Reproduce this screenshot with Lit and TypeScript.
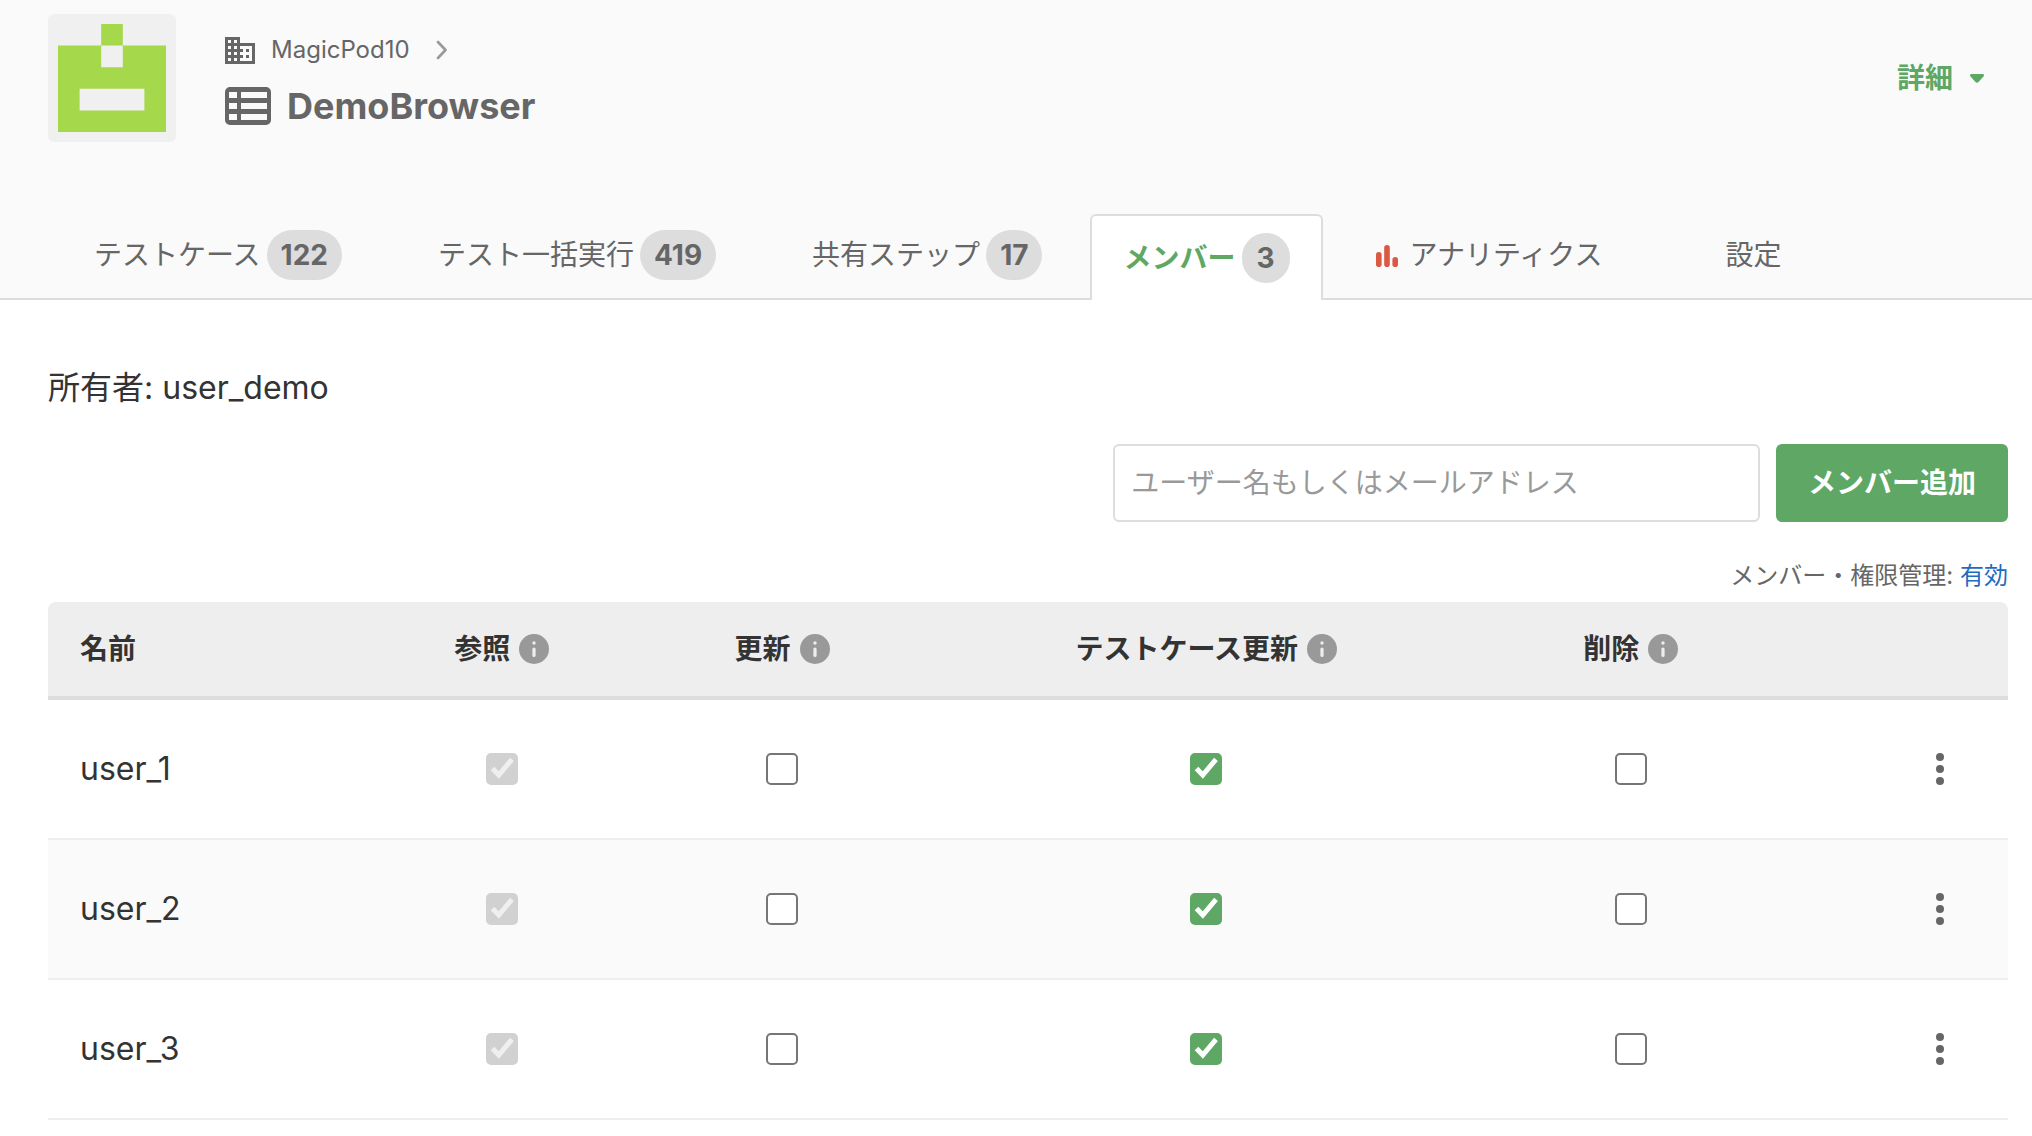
import { LitElement, html, css, svg, nothing } from "lit";
import { customElement, state } from "lit/decorators.js";

interface Tab {
  label: string;
  count?: number;
  kind?: "active" | "analytics";
}

interface Permission {
  key: string;
  label: string;
}

interface Member {
  name: string;
  granted: string[];
}

const TABS: Tab[] = [
  { label: "テストケース", count: 122 },
  { label: "テスト一括実行", count: 419 },
  { label: "共有ステップ", count: 17 },
  { label: "メンバー", count: 3, kind: "active" },
  { label: "アナリティクス", kind: "analytics" },
  { label: "設定" },
];

const PERMISSIONS: Permission[] = [
  { key: "view", label: "参照" },
  { key: "update", label: "更新" },
  { key: "case", label: "テストケース更新" },
  { key: "delete", label: "削除" },
];

const avatar = svg`<svg class="avatar-art" viewBox="0 0 5 5" aria-hidden="true">
  <path d="M2 0h1v1h2v4H0V1h2zM2 1v1h1V1zM1 3v1h3V3z" fill="#a6d84b" fill-rule="evenodd"/></svg>`;

const buildingIcon = svg`<svg class="icon-building" viewBox="2 3 20 18" aria-hidden="true">
  <path fill="#666" d="M12 7V3H2v18h20V7H12zM6 19H4v-2h2v2zm0-4H4v-2h2v2zm0-4H4V9h2v2zm0-4H4V5h2v2zm4 12H8v-2h2v2zm0-4H8v-2h2v2zm0-4H8V9h2v2zm0-4H8V5h2v2zm10 12h-8v-2h2v-2h-2v-2h2v-2h-2V9h8v10zm-2-8h-2v2h2v-2zm0 4h-2v2h2v-2z"/></svg>`;

const tableIcon = svg`<svg class="icon-table" viewBox="0 0 46 38" aria-hidden="true">
  <path fill="#666" fill-rule="evenodd" d="M5 0h36a5 5 0 0 1 5 5v28a5 5 0 0 1-5 5H5a5 5 0 0 1-5-5V5a5 5 0 0 1 5-5zM4 5v6h8V5zM16 5v6h26V5zM4 16v6h8v-6zM16 16v6h26v-6zM4 27v6h8v-6zM16 27v6h26v-6z"/></svg>`;

const chevronIcon = svg`<svg class="icon-chevron" viewBox="0 0 11 20" aria-hidden="true">
  <path d="M2 2l7.500 8L2 18" fill="none" stroke="#999" stroke-width="2.600" stroke-linecap="round" stroke-linejoin="round"/></svg>`;

const caretIcon = svg`<svg class="icon-caret" viewBox="0 0 14 9" aria-hidden="true">
  <path d="M1.500 0h11c1.400 0 1.900 1.500 1 2.500L8.500 8c-.8.900-2.200.900-3 0L.5 2.500C-.4 1.500.1 0 1.500 0z" fill="#5ea764"/></svg>`;

const barsIcon = svg`<svg class="icon-bars" viewBox="0 0 22 24" aria-hidden="true">
  <g fill="#db5843"><rect x="0" y="9" width="5.600" height="15" rx="2.800"/><rect x="8.200" y="2" width="5.600" height="22" rx="2.800"/><rect x="16.400" y="14" width="5.600" height="10" rx="2.800"/></g></svg>`;

const infoIcon = svg`<svg class="icon-info" viewBox="0 0 30 30" aria-hidden="true">
  <circle cx="15" cy="15" r="15" fill="#999"/><circle cx="15" cy="9" r="1.700" fill="#eee"/>
  <path d="M15 15v6.500" stroke="#eee" stroke-width="3.200" stroke-linecap="round"/></svg>`;

const dotsIcon = svg`<svg class="icon-dots" viewBox="0 0 8 32" aria-hidden="true">
  <g fill="#666"><circle cx="4" cy="4" r="4"/><circle cx="4" cy="16" r="4"/><circle cx="4" cy="28" r="4"/></g></svg>`;

@customElement("permission-check")
export class PermissionCheck extends LitElement {
  static properties = {
    label: { type: String },
    checked: { type: Boolean },
    disabled: { type: Boolean },
  };

  declare label: string;
  declare checked: boolean;
  declare disabled: boolean;

  static styles = css`
    :host {
      display: block;
    }
    .box {
      display: grid;
      width: 32px;
      height: 32px;
      margin: 0 auto;
    }
    .input,
    .mark {
      grid-area: 1 / 1;
      width: 32px;
      height: 32px;
    }
    .input {
      appearance: none;
      box-sizing: border-box;
      margin: 0;
      border: 2px solid #767676;
      border-radius: 5px;
      background: #fff;
    }
    .input:checked {
      border-color: #5ea764;
      background: #5ea764;
    }
    .input:checked:disabled {
      border-color: #d1d1d1;
      background: #d1d1d1;
    }
    .mark {
      pointer-events: none;
      visibility: hidden;
      fill: none;
      stroke: #fff;
      stroke-width: 5;
    }
    .input:checked + .mark {
      visibility: visible;
    }
    .input:disabled + .mark {
      stroke: #efefef;
    }
  `;

  render() {
    return html`<span class="box">
      <input
        class="input"
        type="checkbox"
        aria-label=${this.label}
        .checked=${this.checked}
        ?disabled=${this.disabled}
      />
      <svg class="mark" viewBox="0 0 32 32" aria-hidden="true">
        <path d="M6.500 15.500l6.300 6.600L26 6.300" />
      </svg>
    </span>`;
  }
}

@customElement("app-root")
export class AppRoot extends LitElement {
  @state() private members: Member[] = [
    { name: "user_1", granted: ["view", "case"] },
    { name: "user_2", granted: ["view", "case"] },
    { name: "user_3", granted: ["view", "case"] },
  ];

  static styles = css`
    :host {
      display: block;
      min-height: 100vh;
      background: #fff;
      color: #333;
      font-family: Inter, "Noto Sans CJK JP", sans-serif;
      font-size: 28px;
      line-height: 40px;
    }
    svg {
      display: block;
      flex: none;
    }
    a {
      color: inherit;
      text-decoration: none;
    }
    button {
      border: 0;
      background: none;
      font: inherit;
      cursor: pointer;
    }
    .header {
      background: #fafafa;
    }
    .project {
      display: flex;
      align-items: flex-start;
      padding: 14px 48px 72px;
    }
    .avatar {
      box-sizing: border-box;
      width: 128px;
      height: 128px;
      padding: 10px;
      border-radius: 6px;
      background: #f0f0f0;
    }
    .titles {
      flex: 1;
      margin-left: 49px;
      padding-top: 16px;
      color: #666;
    }
    .crumb,
    .title {
      display: flex;
      align-items: center;
    }
    .crumb {
      gap: 16px;
      font-size: 24px;
    }
    .crumb .icon-chevron {
      margin-left: 10px;
    }
    .title {
      gap: 16px;
      margin: 12px 0 0;
      font-size: 36px;
      line-height: 48px;
      font-weight: 700;
    }
    .icon-building {
      width: 30px;
      height: 27px;
    }
    .icon-table {
      width: 46px;
      height: 38px;
    }
    .icon-chevron {
      width: 11px;
      height: 20px;
    }
    .icon-caret {
      width: 14px;
      height: 9px;
    }
    .icon-bars {
      width: 22px;
      height: 24px;
    }
    .icon-info {
      width: 30px;
      height: 30px;
    }
    .icon-dots {
      width: 8px;
      height: 32px;
    }
    .detail {
      display: flex;
      align-items: center;
      gap: 17px;
      margin-top: 44px;
      padding: 0;
      color: #5ea764;
      font-weight: 700;
    }
    .tabs {
      display: flex;
      align-items: flex-end;
      padding-left: 46px;
      box-shadow: inset 0 -2px #ddd;
      color: #666;
    }
    .tab {
      display: flex;
      align-items: center;
      gap: 6px;
      box-sizing: border-box;
      height: 86px;
      padding: 0 48px 4px;
      white-space: nowrap;
    }
    .tab.active {
      padding: 0 31px;
      border: 2px solid #ddd;
      border-bottom: 0;
      border-radius: 6px 6px 0 0;
      background: #fff;
      color: #5ea764;
      font-weight: 700;
    }
    .tab.analytics {
      gap: 12px;
      padding-left: 53px;
      padding-right: 75px;
    }
    .badge {
      min-width: 20px;
      padding: 5px 14px;
      border-radius: 25px;
      background: #ddd;
      color: #666;
      font-weight: 700;
      text-align: center;
    }
    .content {
      padding: 64px 24px 16px 48px;
    }
    .owner {
      margin: 0;
      font-size: 32px;
      line-height: 48px;
    }
    .invite {
      display: flex;
      justify-content: flex-end;
      gap: 16px;
      margin-top: 32px;
    }
    .invite-input {
      box-sizing: border-box;
      width: 33%;
      height: 78px;
      padding: 0 16px;
      border: 2px solid #ddd;
      border-radius: 6px;
      background: #fff;
      color: #333;
      font: inherit;
    }
    .invite-input::placeholder {
      color: #999;
      opacity: 1;
    }
    .invite-button {
      padding: 0 32px;
      border-radius: 6px;
      background: #5ea764;
      color: #fff;
      font-weight: 700;
    }
    .policy {
      margin: 36px 0 8px;
      color: #666;
      font-size: 24px;
      line-height: 36px;
      text-align: right;
    }
    .policy-link {
      color: #1e6bc0;
    }
    .members {
      width: 100%;
      border-collapse: separate;
      border-spacing: 0;
      table-layout: fixed;
    }
    .col-name {
      width: 16%;
    }
    .col-narrow {
      width: 14.3%;
    }
    .col-wide {
      width: 29%;
    }
    .head {
      height: 94px;
      padding: 0;
      border-bottom: 4px solid #ddd;
      background: #eee;
      font-weight: 700;
      text-align: center;
    }
    .head:first-child {
      border-top-left-radius: 8px;
    }
    .head:last-child {
      border-top-right-radius: 8px;
    }
    .head.name,
    .cell.name {
      padding-left: 32px;
      text-align: left;
    }
    .head-label {
      display: flex;
      align-items: center;
      justify-content: center;
      gap: 9px;
      white-space: nowrap;
    }
    .cell {
      height: 138px;
      padding: 0;
      border-bottom: 2px solid #eee;
      font-size: 32px;
      font-weight: 400;
      text-align: center;
    }
    .row:nth-child(even) .cell {
      background: #fafafa;
    }
    .cell.actions {
      padding-right: 48px;
    }
    .menu {
      display: block;
      margin-left: auto;
      padding: 8px 16px;
    }
  `;

  private renderTab(tab: Tab) {
    return html`<a
      class="tab ${tab.kind ?? ""}"
      href="#"
      aria-current=${tab.kind === "active" ? "page" : nothing}
    >
      ${tab.kind === "analytics" ? barsIcon : nothing}
      <span>${tab.label}</span>
      ${tab.count === undefined ? nothing : html`<span class="badge">${tab.count}</span>`}
    </a>`;
  }

  private renderMember(member: Member) {
    return html`<tr class="row">
      <th class="cell name" scope="row">${member.name}</th>
      ${PERMISSIONS.map(
        (p) => html`<td class="cell">
          <permission-check
            .label=${`${member.name} ${p.label}`}
            .checked=${member.granted.includes(p.key)}
            .disabled=${p.key === "view"}
          ></permission-check>
        </td>`
      )}
      <td class="cell actions">
        <button class="menu" type="button" aria-label=${member.name}>${dotsIcon}</button>
      </td>
    </tr>`;
  }

  render() {
    return html`
      <header class="header">
        <div class="project">
          <div class="avatar">${avatar}</div>
          <div class="titles">
            <nav class="crumb">
              ${buildingIcon}<a href="#">MagicPod10</a>${chevronIcon}
            </nav>
            <h1 class="title">${tableIcon}<span>DemoBrowser</span></h1>
          </div>
          <button class="detail" type="button">詳細 ${caretIcon}</button>
        </div>
        <nav class="tabs">${TABS.map((tab) => this.renderTab(tab))}</nav>
      </header>
      <main class="content">
        <p class="owner">所有者: user_demo</p>
        <form class="invite" @submit=${(e: Event) => e.preventDefault()}>
          <input
            class="invite-input"
            type="text"
            aria-label="ユーザー名もしくはメールアドレス"
            placeholder="ユーザー名もしくはメールアドレス"
          />
          <button class="invite-button" type="submit">メンバー追加</button>
        </form>
        <p class="policy">メンバー・権限管理: <a class="policy-link" href="#">有効</a></p>
        <table class="members">
          <colgroup>
            <col class="col-name" />
            <col class="col-narrow" />
            <col class="col-narrow" />
            <col class="col-wide" />
            <col class="col-narrow" />
            <col />
          </colgroup>
          <thead>
            <tr>
              <th class="head name" scope="col">名前</th>
              ${PERMISSIONS.map(
                (p) => html`<th class="head" scope="col">
                  <span class="head-label">${p.label}${infoIcon}</span>
                </th>`
              )}
              <td class="head"></td>
            </tr>
          </thead>
          <tbody>
            ${this.members.map((m) => this.renderMember(m))}
          </tbody>
        </table>
      </main>
    `;
  }
}
